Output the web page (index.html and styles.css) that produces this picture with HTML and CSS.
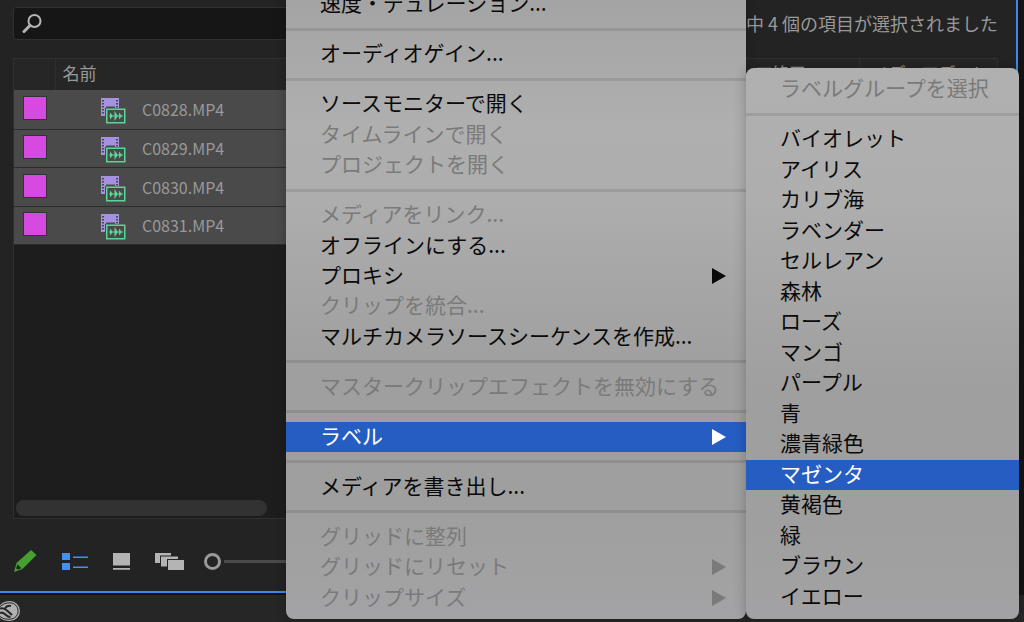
FILE: index.html
```html
<!DOCTYPE html>
<html lang="ja">
<head>
<meta charset="utf-8">
<title>プロジェクト</title>
<link rel="stylesheet" href="styles.css">
</head>
<body>
<svg class="defs" aria-hidden="true">
  <symbol id="clip" viewBox="0 0 25 26">
    <path fill="#a591e0" d="M0 0h18v10H0zM0 10h4v8H0z"/>
    <path fill="#4a4a4a" d="M1 2h2v1.500H1zM1 5h2v1.500H1zM1 8h2v1.500H1zM1 11h2v1.500H1zM1 14h2v1.500H1zM15 2h2v1.500h-2zM15 5h2v1.500h-2zM15 8h2v1.500h-2zM5 8.500h9v1.500H5z"/>
    <path fill="none" stroke="#5bd597" stroke-width="1.500" d="M5.750 11.250h18v13.500h-18z"/>
    <path fill="#5bd597" d="M8 17.500h14v1H8zM9 14.500l3 3.500-3 3.500zM13.500 13l3.500 5-3.500 5zM18 14.500l3 3.500-3 3.500z"/>
  </symbol>
  <symbol id="arrow" viewBox="0 0 14 16"><path fill="currentColor" d="M0 0l14 8-14 8z"/></symbol>
</svg>

<main class="panel">
  <div class="topbar">
    <label class="search">
      <svg width="20" height="20" viewBox="0 0 20 20" fill="none" stroke="#b4b4b4" stroke-linecap="round"><circle cx="12.500" cy="7" r="6" stroke-width="2"/><path stroke-width="3" d="M8 11.500L2 17.500"/></svg>
      <input type="search" aria-label="検索">
    </label>
    <p class="status">5 個中 4 個の項目が選択されました</p>
  </div>

  <div class="bin">
    <table class="clips">
      <thead>
        <tr><th class="col-label" aria-label="ラベル"></th><th>名前</th><th class="col-end">メディア終了</th><th class="col-duration">メディアデュレ</th></tr>
      </thead>
      <tbody>
        <tr><td><span class="swatch"></span></td><td colspan="3"><span class="clip"><svg width="25" height="26"><use href="#clip"/></svg>C0828.MP4</span></td></tr>
        <tr><td><span class="swatch"></span></td><td colspan="3"><span class="clip"><svg width="25" height="26"><use href="#clip"/></svg>C0829.MP4</span></td></tr>
        <tr><td><span class="swatch"></span></td><td colspan="3"><span class="clip"><svg width="25" height="26"><use href="#clip"/></svg>C0830.MP4</span></td></tr>
        <tr><td><span class="swatch"></span></td><td colspan="3"><span class="clip"><svg width="25" height="26"><use href="#clip"/></svg>C0831.MP4</span></td></tr>
      </tbody>
    </table>
    <div class="scroll"></div>
  </div>

  <div class="tools">
    <button aria-label="書き込み可能"><svg width="23" height="22" viewBox="0 0 23 22"><path fill="#46a02f" d="M17 0l5.500 5L8.500 19 0 22l2.500-9z"/><path fill="#232323" d="M3.500 14.500l4 3.800-3.500 1.200-2-1z"/></svg></button>
    <button aria-label="リスト表示"><svg width="26" height="17" viewBox="0 0 26 17" fill="#4490ee"><path d="M0 0h8v7H0zM0 10h8v7H0zM11 3.500h15v1.500H11zM11 13.500h15v1.500H11z"/></svg></button>
    <button aria-label="アイコン表示"><svg width="17" height="17" viewBox="0 0 17 17" fill="#b4b4b4"><path d="M0 0h17v12.500H0zM0 15h17v1.800H0z"/></svg></button>
    <button aria-label="フリーフォーム表示"><svg width="29" height="17" viewBox="0 0 29 17" fill="#b4b4b4"><path d="M0 0h16v2.500H5V10H0zM6 3.500h17V6H12v7.500H6zM13 7h16v10H13z"/></svg></button>
    <input class="zoom" type="range" min="0" max="100" value="0" aria-label="アイコンサイズ">
  </div>
</main>

<footer class="dock">
  <svg width="20" height="20" viewBox="0 0 20 20" fill="none"><path fill="#b0b0b0" d="M0 4C3 1 6 0 10 0a9.800 9.800 0 0 1 0 20C6 20 2 19 0 17z"/><path stroke="#262626" d="M0 5.500C3 3 6 1.800 10 1.800a8.200 8.200 0 0 1 0 16.400C6 18.200 3 18 0 15.500"/><path stroke="#262626" stroke-width="2" d="M0 7.500c3-1 5 0 7 2l5 4.500M0 12c2-1 4 0 6 2 1.500 1.500 3 2 4.500 2M5 7c2-2 4-2.500 6-2"/></svg>
</footer>

<div class="menus">
  <ul class="menu menu-clip">
    <li><button>速度・デュレーション...</button></li>
    <li class="rule"></li>
    <li><button>オーディオゲイン...</button></li>
    <li class="rule"></li>
    <li><button>ソースモニターで開く</button></li>
    <li><button disabled>タイムラインで開く</button></li>
    <li><button disabled>プロジェクトを開く</button></li>
    <li class="rule"></li>
    <li><button disabled>メディアをリンク...</button></li>
    <li><button>オフラインにする...</button></li>
    <li><button>プロキシ<svg width="14" height="16"><use href="#arrow"/></svg></button></li>
    <li><button disabled>クリップを統合...</button></li>
    <li><button>マルチカメラソースシーケンスを作成...</button></li>
    <li class="rule"></li>
    <li><button disabled>マスタークリップエフェクトを無効にする</button></li>
    <li class="rule"></li>
    <li><button class="active">ラベル<svg width="14" height="16"><use href="#arrow"/></svg></button></li>
    <li class="rule"></li>
    <li><button>メディアを書き出し...</button></li>
    <li class="rule"></li>
    <li><button disabled>グリッドに整列</button></li>
    <li><button disabled>グリッドにリセット<svg width="14" height="16"><use href="#arrow"/></svg></button></li>
    <li><button disabled>クリップサイズ<svg width="14" height="16"><use href="#arrow"/></svg></button></li>
  </ul>
  <ul class="menu menu-labels">
    <li><button disabled>ラベルグループを選択</button></li>
    <li class="rule"></li>
    <li><button>バイオレット</button></li>
    <li><button>アイリス</button></li>
    <li><button>カリブ海</button></li>
    <li><button>ラベンダー</button></li>
    <li><button>セルレアン</button></li>
    <li><button>森林</button></li>
    <li><button>ローズ</button></li>
    <li><button>マンゴ</button></li>
    <li><button>パープル</button></li>
    <li><button>青</button></li>
    <li><button>濃青緑色</button></li>
    <li><button class="active">マゼンタ</button></li>
    <li><button>黄褐色</button></li>
    <li><button>緑</button></li>
    <li><button>ブラウン</button></li>
    <li><button>イエロー</button></li>
  </ul>
</div>
</body>
</html>
```
FILE: styles.css
```css
* { box-sizing: border-box; }

body {
  margin: 0;
  height: 100vh;
  overflow: hidden;
  position: relative;
  display: flex;
  flex-direction: column;
  background: #141414;
  color: #999;
  font-family: "Noto Sans CJK JP", sans-serif;
  font-size: 17px;
}

button, input { font: inherit; color: inherit; }
button { border: 0; padding: 0; background: none; }
.defs { position: absolute; width: 0; height: 0; }

/* Project panel */
.panel {
  flex: 1;
  display: flex;
  flex-direction: column;
  margin-right: 6px;
  padding: 7px 18px 0 13px;
  background: #232323;
  border-right: 2px solid #3f88ec;
  border-bottom: 2px solid #3f88ec;
}

.topbar {
  display: flex;
  align-items: center;
  justify-content: space-between;
  height: 33px;
  margin-bottom: 18px;
}
.search {
  display: flex;
  align-items: center;
  width: 400px;
  height: 33px;
  padding-left: 8px;
  background: #161616;
  border: 1px solid #303030;
  border-radius: 3px;
}
.search input {
  flex: 1;
  min-width: 0;
  background: none;
  border: 0;
  outline: 0;
}
.status {
  margin: 0;
  padding-bottom: 2px;
  font-size: 18px;
  white-space: nowrap;
}

.bin {
  flex: 1;
  display: flex;
  flex-direction: column;
  justify-content: space-between;
  background: #1d1d1d;
  border: 1px solid #303030;
}
.clips {
  width: 100%;
  table-layout: fixed;
  border-collapse: collapse;
}
.clips th {
  height: 31px;
  padding: 0 0 4px 7px;
  background: #262626;
  border-right: 1px solid #303030;
  font-weight: 400;
  line-height: 24px;
  text-align: left;
  white-space: nowrap;
  overflow: hidden;
}
.clips .col-label { width: 41px; }
.clips .col-end { width: 161px; }
.clips .col-duration { width: 138px; padding-left: 12px; border-right: 0; }
.clips td {
  height: 39px;
  padding: 0;
  background: #4a4a4a;
  border-bottom: 1px solid #2b2b2b;
}
.clips tr:nth-child(even) td { height: 38px; }
.swatch {
  display: block;
  width: 24px;
  height: 24px;
  margin: 0 0 2px 9px;
  background: #d64ae0;
  border: 1px solid #333;
}
.clip {
  display: flex;
  align-items: center;
  gap: 16px;
  padding-left: 46px;
  font-size: 16px;
  line-height: 24px;
}
.clip svg { margin-top: 4px; }
.scroll {
  width: 251px;
  height: 16px;
  margin: 0 0 2px 2px;
  border-radius: 8px;
  background: #323232;
}

.tools {
  display: flex;
  align-items: center;
  gap: 25px;
  height: 72px;
  padding: 12px 0 0 1px;
}
.tools button { display: flex; }
.zoom {
  appearance: none;
  width: 160px;
  height: 17px;
  margin: 0 0 0 -5px;
  background: linear-gradient(#4a4a4a, #4a4a4a) center / 100% 3px no-repeat;
}
.zoom::-webkit-slider-thumb {
  appearance: none;
  width: 17px;
  height: 17px;
  border: 3px solid #999;
  border-radius: 50%;
  background: #232323;
  box-shadow: 0 0 0 3px #232323;
}

.dock {
  height: 27px;
  margin-top: 2px;
  padding-top: 6px;
  background: #262626;
}
.dock svg { display: block; }

/* Context menu and its submenu */
.menus {
  position: absolute;
  top: -11px;
  bottom: 3px;
  left: 286px;
  right: 5px;
  display: flex;
}
.menu {
  display: flex;
  flex-direction: column;
  margin: 0;
  list-style: none;
  color: #0a0a0a;
  font-size: 21px;
  line-height: 30px;
  border-radius: 8px;
  overflow: hidden;
  box-shadow: 0 0 12px rgba(0, 0, 0, .25);
}
.menu-clip {
  flex: 460;
  padding: 0 0 6px;
  background: linear-gradient(#a3a3a3, #afafaf 22%, #adadad 34%, #9f9f9f 60%, #9f9f9f 82%, #a3a3a5);
}
.menu-labels {
  flex: 273;
  margin-top: 79px;
  padding: 6px 0 7px;
  background: linear-gradient(#b0b0b0, #aeaeae 24%, #9f9f9f 58%, #9f9f9f 82%, #a2a2a4);
}
.menu li {
  flex: 61 0 0;
  min-height: 0;
  display: flex;
}
.menu .rule { flex-grow: 39; align-items: center; }
.rule::before {
  content: "";
  flex: 1;
  height: 3px;
  background: rgba(0, 0, 0, .1);
}
.menu button {
  flex: 1;
  display: flex;
  align-items: center;
  justify-content: space-between;
  padding: 0 20px 4px 34px;
  white-space: nowrap;
}
.menu button svg { margin-top: 4px; }
.menu button:disabled { color: #7a7a7a; }
.menu .active { background: #255dc2; color: #fff; }
```
